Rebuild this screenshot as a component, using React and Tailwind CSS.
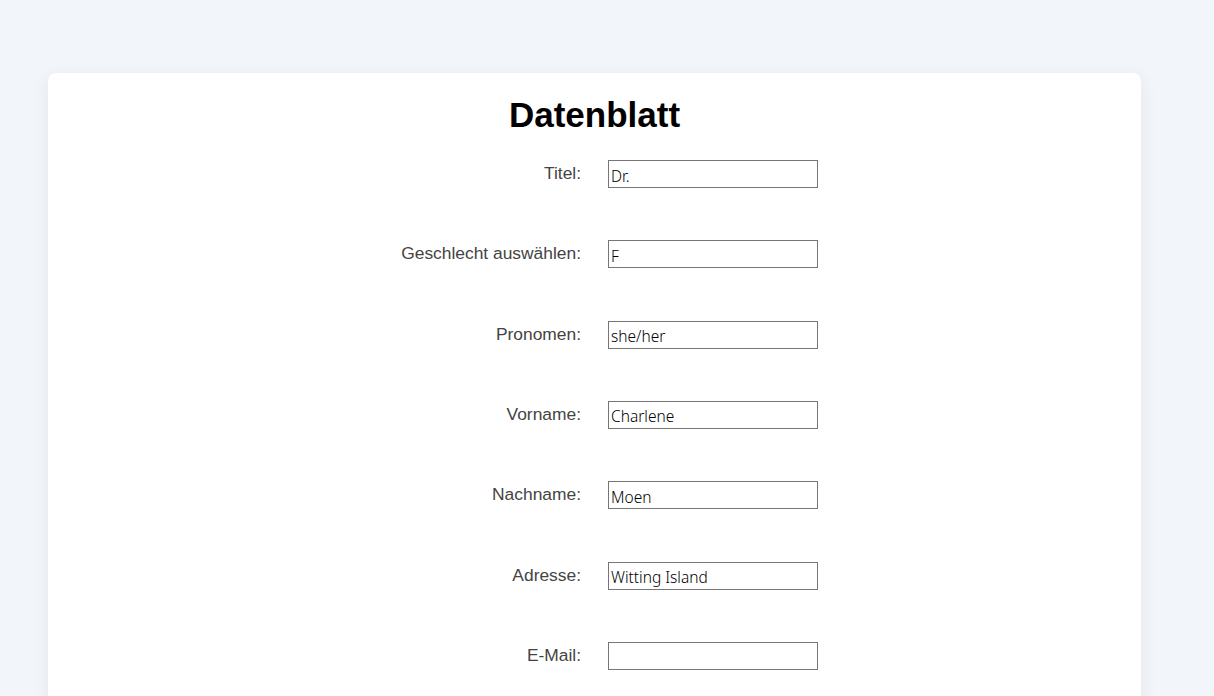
import React from 'react';

const fields = [
    { id: 'titel', label: 'Titel:', value: 'Dr.' },
    { id: 'geschlecht', label: 'Geschlecht auswählen:', value: 'F' },
    { id: 'pronomen', label: 'Pronomen:', value: 'she/her' },
    { id: 'vorname', label: 'Vorname:', value: 'Charlene' },
    { id: 'nachname', label: 'Nachname:', value: 'Moen' },
    { id: 'adresse', label: 'Adresse:', value: 'Witting Island' },
    { id: 'email', label: 'E-Mail:', value: '' },
];

export default function App() {
    return (
        <div className="min-h-screen bg-[#f2f5f9] pt-[73px] font-['Liberation_Sans',Arial,sans-serif]">
            <div className="ml-[48px] w-[1093px] rounded-t-lg bg-white pt-[22px] pb-[40px] shadow-[0_4px_18px_rgba(0,0,0,0.07)]">
                <h1 className="text-center text-[35px] font-bold leading-[40px] text-black">Datenblatt</h1>

                <form className="mt-[25px] grid grid-cols-2 gap-x-[27px] gap-y-[52.33px]">
                    {fields.map((field) => (
                        <React.Fragment key={field.id}>
                            <label
                                htmlFor={field.id}
                                className="text-right text-[17.4px] leading-[26px] text-[#444]"
                            >
                                {field.label}
                            </label>
                            <div>
                                <input
                                    id={field.id}
                                    type="text"
                                    defaultValue={field.value}
                                    className="block h-[28px] w-[210px] border border-[#767676] bg-white px-[2px] pt-[3px] text-[15.5px] text-black outline-none font-['Noto_Sans',sans-serif] font-light"
                                />
                            </div>
                        </React.Fragment>
                    ))}
                </form>
            </div>
        </div>
    );
}
